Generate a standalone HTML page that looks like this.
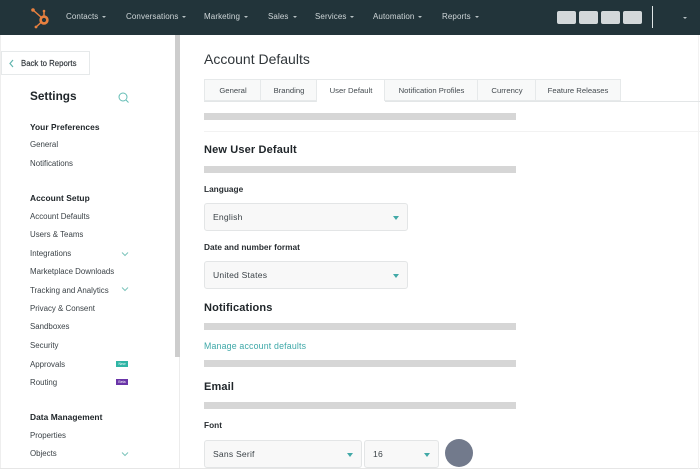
<!DOCTYPE html>
<html><head><meta charset="utf-8"><style>
html,body{margin:0;padding:0;background:#fff}
body{width:700px;height:469px;overflow:hidden;position:relative;font-family:"Liberation Sans",sans-serif;color:#2a2f33}
#w{position:absolute;left:0;top:0;width:700px;height:469px;overflow:hidden;background:#fff;filter:blur(.3px)}
.a{position:absolute;white-space:nowrap}
.n{font-size:8px;line-height:10px;color:#cfd6d8;top:12px;letter-spacing:.1px}
.n::after{content:"";display:inline-block;border:2px solid transparent;border-top:2.5px solid #b8c1c4;border-bottom:0;margin-left:4px;vertical-align:1px}
.s{font-size:7.9px;line-height:10px;left:30px;color:#3b4247}
.h{font-size:8.4px;line-height:10px;left:30px;font-weight:bold;color:#20262a;letter-spacing:.05px}
.g{position:absolute;left:204px;width:312px;height:7px;background:#d6d6d6}
.t{position:absolute;top:79px;height:22px;box-sizing:border-box;border:1px solid #e6e9ea;border-right:0;background:#f8f9f9;font-size:7.7px;line-height:21px;text-align:center;color:#444b50}
.l{font-size:8.3px;line-height:10px;left:204px;font-weight:bold;color:#2a2f33}
.sel{position:absolute;box-sizing:border-box;height:28px;background:#f8f8f8;border:1px solid #e3e5e6;border-radius:3px;font-size:8.6px;line-height:26px;padding-left:8px;color:#3b4247;letter-spacing:.2px}
.sel::after{content:"";position:absolute;right:8px;top:12px;border:3px solid transparent;border-top:4px solid #42a9a7;border-bottom:0}
.b{font-size:11px;line-height:13px;left:204px;font-weight:bold;color:#20262a;letter-spacing:.15px}
.u{position:absolute;top:11px;width:19px;height:13px;background:#d3d8da;border-radius:2px}
.bd{position:absolute;left:116px;width:12px;height:6px;font-size:3.500px;line-height:6px;color:#fff;text-align:center}
</style></head><body><div id="w">
<div class="a" style="left:0;top:0;width:700px;height:35px;background:#22343a"></div>
<svg class="a" style="left:29px;top:6px" width="24" height="24" viewBox="0 0 24 24" fill="none"><circle cx="15" cy="14" r="3.400" stroke="#e8803f" stroke-width="2.600"/><path d="M15 10V5.500M4 4l8.500 7.500M7 21l5-4.500" stroke="#e8803f" stroke-width="1.500"/><circle cx="15" cy="5" r="1.300" fill="#e8803f"/><circle cx="4" cy="4" r="1.800" fill="#e8803f"/><circle cx="7" cy="21" r="1.400" fill="#e8803f"/></svg>
<div class="a n" style="left:66px">Contacts</div>
<div class="a n" style="left:126px">Conversations</div>
<div class="a n" style="left:204px">Marketing</div>
<div class="a n" style="left:268px">Sales</div>
<div class="a n" style="left:315px">Services</div>
<div class="a n" style="left:373px">Automation</div>
<div class="a n" style="left:442px">Reports</div>
<div class="u" style="left:557px"></div><div class="u" style="left:579px"></div><div class="u" style="left:601px"></div><div class="u" style="left:623px"></div>
<div class="a" style="left:652px;top:6px;width:1px;height:22px;background:#dfe5e6"></div>
<div class="a" style="left:683px;top:17px;border:2px solid transparent;border-top:2.500px solid #b8c1c4;border-bottom:0"></div>

<div class="a" style="left:0;top:35px;width:1px;height:434px;background:#eeeeee"></div>
<div class="a" style="left:175px;top:35px;width:5px;height:322px;background:#cdcdcd"></div>
<div class="a" style="left:179px;top:357px;width:1px;height:112px;background:#ececec"></div>
<div class="a" style="left:0;top:468px;width:700px;height:1px;background:#e6e6e6"></div>
<div class="a" style="left:698px;top:35px;width:1px;height:434px;background:#f2f2f2"></div>

<div class="a" style="left:1px;top:51px;width:89px;height:24px;box-sizing:border-box;border:1px solid #e6e9ea;background:#fff;font-size:7.800px;line-height:23px;padding-left:19px;color:#2f353a;-webkit-text-stroke:.15px #2f353a">Back to Reports</div>
<svg class="a" style="left:8px;top:59px" width="7" height="9" viewBox="0 0 7 9" fill="none"><path d="M5 1L2 4.500L5 8" stroke="#62b5ae" stroke-width="1.200"/></svg>
<div class="a" style="left:30px;top:89px;font-size:11.800px;line-height:15px;font-weight:bold;color:#20262a">Settings</div>
<svg class="a" style="left:117px;top:91px" width="13" height="13" viewBox="0 0 13 13" fill="none"><circle cx="6" cy="6" r="4" stroke="#63bdb5" stroke-width="1"/><path d="M9 9l2.500 2.500" stroke="#63bdb5" stroke-width="1"/></svg>

<div class="a h" style="top:122px">Your Preferences</div>
<div class="a s" style="top:140px">General</div>
<div class="a s" style="top:159px">Notifications</div>
<div class="a h" style="top:193px">Account Setup</div>
<div class="a s" style="top:212px">Account Defaults</div>
<div class="a s" style="top:230px">Users &amp; Teams</div>
<div class="a s" style="top:249px">Integrations</div>
<div class="a s" style="top:267px">Marketplace Downloads</div>
<div class="a s" style="top:286px">Tracking and Analytics</div>
<div class="a s" style="top:304px">Privacy &amp; Consent</div>
<div class="a s" style="top:322px">Sandboxes</div>
<div class="a s" style="top:341px">Security</div>
<div class="a s" style="top:360px">Approvals</div>
<div class="a s" style="top:378px">Routing</div>
<div class="a h" style="top:412px">Data Management</div>
<div class="a s" style="top:431px">Properties</div>
<div class="a s" style="top:449px">Objects</div>
<svg class="a" style="left:121px;top:251px" width="8" height="6" viewBox="0 0 8 6" fill="none"><path d="M1 1.500L4 4.500L7 1.500" stroke="#7cc4bb" stroke-width="1"/></svg>
<svg class="a" style="left:121px;top:286px" width="8" height="6" viewBox="0 0 8 6" fill="none"><path d="M1 1.500L4 4.500L7 1.500" stroke="#7cc4bb" stroke-width="1"/></svg>
<svg class="a" style="left:121px;top:451px" width="8" height="6" viewBox="0 0 8 6" fill="none"><path d="M1 1.500L4 4.500L7 1.500" stroke="#7cc4bb" stroke-width="1"/></svg>
<div class="bd" style="top:361px;background:#2fb5a5">New</div>
<div class="bd" style="top:379px;background:#6a35a8">Beta</div>

<div class="a" style="left:204px;top:50px;font-size:14px;line-height:18px;color:#30363a">Account Defaults</div>
<div class="a" style="left:204px;top:101px;width:496px;height:1px;background:#e3e6e7"></div>
<div class="t" style="left:204px;width:57px">General</div>
<div class="t" style="left:260px;width:57px">Branding</div>
<div class="t" style="left:316px;width:69px;background:#fff;height:23px;border-bottom:0">User Default</div>
<div class="t" style="left:384px;width:94px">Notification Profiles</div>
<div class="t" style="left:477px;width:59px">Currency</div>
<div class="t" style="left:535px;width:86px;border-right:1px solid #e6e9ea">Feature Releases</div>

<div class="g" style="top:113px"></div>
<div class="a" style="left:204px;top:131px;width:496px;height:1px;background:#f2f2f2"></div>
<div class="a b" style="top:144px">New User Default</div>
<div class="g" style="top:166px"></div>
<div class="a l" style="top:184px">Language</div>
<div class="sel" style="left:204px;top:203px;width:204px">English</div>
<div class="a l" style="top:242px">Date and number format</div>
<div class="sel" style="left:204px;top:261px;width:204px">United States</div>
<div class="a b" style="top:302px">Notifications</div>
<div class="g" style="top:323px"></div>
<div class="a" style="left:204px;top:341px;font-size:8.800px;line-height:11px;color:#3ea8a8;letter-spacing:.17px">Manage account defaults</div>
<div class="g" style="top:360px"></div>
<div class="a b" style="top:381px">Email</div>
<div class="g" style="top:402px"></div>
<div class="a l" style="top:420px">Font</div>
<div class="sel" style="left:204px;top:440px;width:158px">Sans Serif</div>
<div class="sel" style="left:364px;top:440px;width:75px">16</div>
<div class="a" style="left:445px;top:439px;width:28px;height:28px;border-radius:50%;background:#727a8c"></div>
</div></body></html>
